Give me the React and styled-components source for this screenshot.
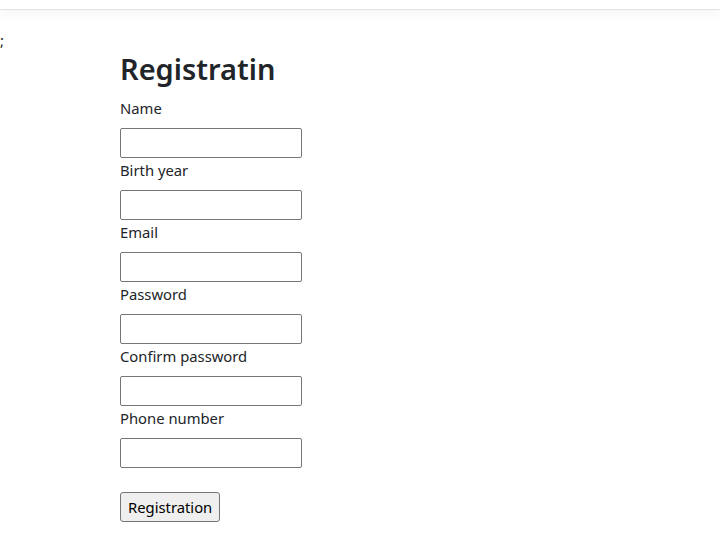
import React from "react";
import styled, { createGlobalStyle } from "styled-components";

const GlobalStyle = createGlobalStyle`
  body {
    margin: 0;
    font-family: "Noto Sans", "Open Sans", sans-serif;
    font-size: 15px;
    line-height: 24px;
    color: #212529;
    background: #ffffff;
  }
`;

const TopBar = styled.div`
  height: 9px;
  border-bottom: 1px solid #e3e3e3;
  box-shadow: 0 2px 14px rgba(0, 0, 0, 0.06);
  background: #ffffff;
`;

const Stray = styled.div`
  font-size: 15px;
  line-height: 24px;
  padding-top: 18px;
  height: 24px;
  margin-bottom: -3px;
`;

const Form = styled.form`
  display: flex;
  flex-direction: column;
  align-items: flex-start;
  padding-left: 120px;
`;

const Title = styled.h1`
  font-size: 29px;
  font-weight: 600;
  line-height: 39px;
  margin: 0 0 8px;
`;

const Label = styled.label`
  display: block;
  font-size: 14.8px;
  line-height: 24px;
  margin-bottom: 8px;
`;

const Input = styled.input`
  box-sizing: border-box;
  width: 182px;
  height: 30px;
  border: 1px solid #767676;
  border-radius: 2px;
  padding: 1px 2px;
  font: inherit;
`;

const Button = styled.button`
  margin-top: 24px;
  height: 30px;
  padding: 0 7px;
  border: 1px solid #767676;
  border-radius: 3px;
  background: #efefef;
  color: #000;
  font-family: inherit;
  font-size: 14.8px;
`;

const fields = [
  "Name",
  "Birth year",
  "Email",
  "Password",
  "Confirm password",
  "Phone number",
];

export default function App() {
  return (
    <>
      <GlobalStyle />
      <TopBar />
      <Stray>;</Stray>
      <Form onSubmit={(e) => e.preventDefault()}>
        <Title>Registratin</Title>
        {fields.map((f) => (
          <React.Fragment key={f}>
            <Label>{f}</Label>
            <Input type={f.includes("assword") ? "password" : "text"} />
          </React.Fragment>
        ))}
        <Button type="submit">Registration</Button>
      </Form>
    </>
  );
}
